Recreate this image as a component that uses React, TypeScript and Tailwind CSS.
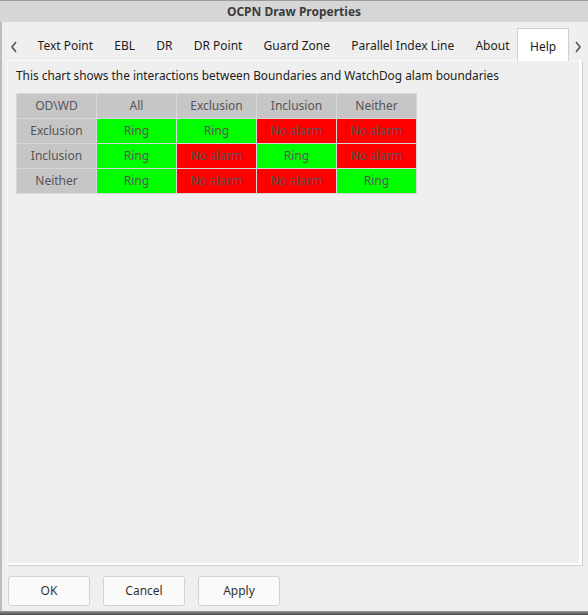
import React from "react";

const G = "bg-[#00ff00]";
const R = "bg-[#ff0000]";

const rows: { label: string; cells: [string, string][] }[] = [
  { label: "Exclusion", cells: [["Ring", G], ["Ring", G], ["No alarm", R], ["No alarm", R]] },
  { label: "Inclusion", cells: [["Ring", G], ["No alarm", R], ["Ring", G], ["No alarm", R]] },
  { label: "Neither", cells: [["Ring", G], ["No alarm", R], ["No alarm", R], ["Ring", G]] },
];

const tabs = ["Text Point", "EBL", "DR", "DR Point", "Guard Zone", "Parallel Index Line", "About"];

export default function App() {
  return (
    <div className="w-[588px] h-[615px] bg-[#efefef] flex flex-col overflow-hidden" style={{ fontFamily: '"Noto Sans", sans-serif' }}>
      {/* title bar */}
      <div className="h-[22px] shrink-0 bg-[#d6d6d6] border-t border-[#9a9a9a] flex items-center justify-center pt-[1px]">
        <span className="text-[12px] font-bold text-[#3c3c3c] leading-none">OCPN Draw Properties</span>
      </div>
      <div className="flex-1 flex flex-col border-l-2 border-[#bdbdbd]">
        {/* tab bar */}
        <div className="h-[38px] shrink-0 flex items-end relative">
          <div className="w-[26px] h-[32px] flex items-center justify-center self-start mt-[9px] -ml-[1px] shrink-0">
            <svg width="8" height="12" viewBox="0 0 8 12"><polyline points="6,1 2,6 6,11" fill="none" stroke="#555" strokeWidth="1.6" /></svg>
          </div>
          <div className="flex items-end h-full whitespace-nowrap">
            {tabs.map((t) => (
              <div key={t} className="shrink-0 px-[10.6px] pt-[3px] h-[32px] flex items-center text-[12px] text-[#1c1c1c]">{t}</div>
            ))}
            <div className="shrink-0 ml-[-3px] h-[33px] pt-[3px] px-[12px] flex items-center text-[12px] text-[#1c1c1c] bg-white border border-b-0 border-[#d0d0d0] mb-[-1px] relative z-10">Help</div>
          </div>
          <div className="w-[16px] h-[32px] flex items-center justify-center self-start mt-[9px] ml-[1px] shrink-0">
            <svg width="8" height="12" viewBox="0 0 8 12"><polyline points="2,1 6,6 2,11" fill="none" stroke="#555" strokeWidth="1.6" /></svg>
          </div>
        </div>
        {/* panel */}
        <div className="ml-[5px] w-[575px] h-[505px] shrink-0 border border-[#fafafa] border-r-[3px] border-r-white border-b-2 border-b-white shadow-[1px_1px_0_#d0d0d0] bg-[#efefef] px-[8px] pt-[5px]">
          <div className="text-[11.85px] text-[#1c1c1c] leading-[18px]">This chart shows the interactions between Boundaries and WatchDog alam boundaries</div>
          <div className="mt-[9px] w-[401px] grid grid-cols-[79px_79px_79px_79px_79px] gap-[1px] bg-[#d8d8d8] border border-[#d8d8d8] text-[12px] text-[#555]">
            {["OD\\WD", "All", "Exclusion", "Inclusion", "Neither"].map((h) => (
              <div key={h} className="h-[24px] bg-[#c6c6c6] flex items-center justify-center">{h}</div>
            ))}
            {rows.map((r) => (
              <React.Fragment key={r.label}>
                <div className="h-[24px] bg-[#c6c6c6] flex items-center justify-center">{r.label}</div>
                {r.cells.map(([txt, bg], i) => (
                  <div key={i} className={`h-[24px] ${bg} flex items-center justify-center`}>{txt}</div>
                ))}
              </React.Fragment>
            ))}
          </div>
        </div>
        {/* buttons */}
        <div className="flex gap-[13px] pl-[6px] mt-[11px]">
          {["OK", "Cancel", "Apply"].map((b) => (
            <div key={b} className="w-[82px] h-[30px] bg-[#fafafa] border border-[#d2d2d2] rounded-[3px] flex items-center justify-center text-[12px] text-[#333]">{b}</div>
          ))}
        </div>
        <div className="flex-1" />
      </div>
      <div className="h-[4px] shrink-0 bg-gradient-to-b from-[#9a9a9a] to-[#4a4a4a]" />
    </div>
  );
}
